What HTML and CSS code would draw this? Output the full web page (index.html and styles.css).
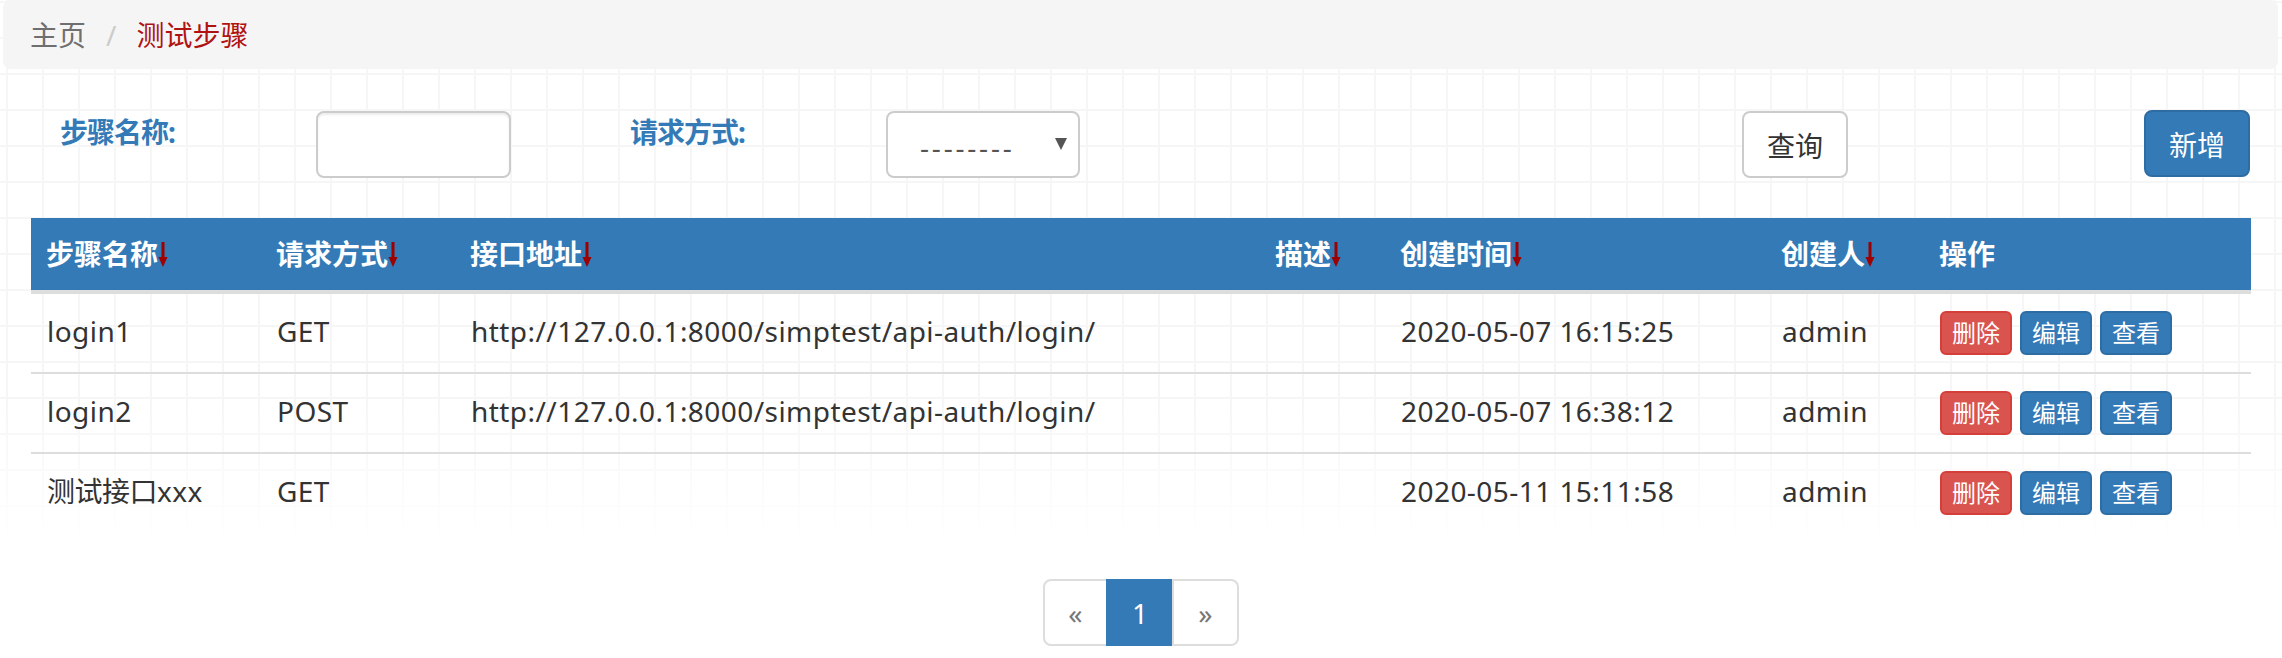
FILE: index.html
```html
<!DOCTYPE html>
<html lang="zh-CN">
<head>
<meta charset="utf-8">
<title>测试步骤</title>
<link rel="stylesheet" href="styles.css">
</head>
<body>
<ol class="breadcrumb">
  <li class="crumb"><a class="crumb-link" href="#">主页</a></li>
  <li class="crumb-sep">/</li>
  <li class="crumb active">测试步骤</li>
</ol>

<form class="search">
  <label class="search-label">步骤名称:</label>
  <input class="form-control" type="text">
  <label class="search-label">请求方式:</label>
  <div class="select-wrap">
    <select class="form-select"><option>--------</option></select>
    <span class="caret"></span>
  </div>
  <button class="btn btn-default" type="button">查询</button>
  <button class="btn btn-primary" type="button">新增</button>
</form>

<table class="table">
  <colgroup>
    <col class="c1"><col class="c2"><col class="c3"><col class="c4"><col class="c5"><col class="c6"><col class="c7">
  </colgroup>
  <thead>
    <tr>
      <th>步骤名称<svg class="sort" viewBox="0 0 10 26" width="10" height="26"><path d="M5 0V18" stroke="#9e0000" stroke-width="3"/><path d="M0.5 15L9.5 15L5 25Z" fill="#9e0000"/></svg></th>
      <th>请求方式<svg class="sort" viewBox="0 0 10 26" width="10" height="26"><path d="M5 0V18" stroke="#9e0000" stroke-width="3"/><path d="M0.5 15L9.5 15L5 25Z" fill="#9e0000"/></svg></th>
      <th>接口地址<svg class="sort" viewBox="0 0 10 26" width="10" height="26"><path d="M5 0V18" stroke="#9e0000" stroke-width="3"/><path d="M0.5 15L9.5 15L5 25Z" fill="#9e0000"/></svg></th>
      <th>描述<svg class="sort" viewBox="0 0 10 26" width="10" height="26"><path d="M5 0V18" stroke="#9e0000" stroke-width="3"/><path d="M0.5 15L9.5 15L5 25Z" fill="#9e0000"/></svg></th>
      <th>创建时间<svg class="sort" viewBox="0 0 10 26" width="10" height="26"><path d="M5 0V18" stroke="#9e0000" stroke-width="3"/><path d="M0.5 15L9.5 15L5 25Z" fill="#9e0000"/></svg></th>
      <th>创建人<svg class="sort" viewBox="0 0 10 26" width="10" height="26"><path d="M5 0V18" stroke="#9e0000" stroke-width="3"/><path d="M0.5 15L9.5 15L5 25Z" fill="#9e0000"/></svg></th>
      <th>操作</th>
    </tr>
  </thead>
  <tbody>
    <tr>
      <td>login1</td>
      <td>GET</td>
      <td>http://127.0.0.1:8000/simptest/api-auth/login/</td>
      <td></td>
      <td>2020-05-07 16:15:25</td>
      <td>admin</td>
      <td><div class="ops"><button class="btn-xs btn-danger" type="button">删除</button><button class="btn-xs btn-blue" type="button">编辑</button><button class="btn-xs btn-blue" type="button">查看</button></div></td>
    </tr>
    <tr>
      <td>login2</td>
      <td>POST</td>
      <td>http://127.0.0.1:8000/simptest/api-auth/login/</td>
      <td></td>
      <td>2020-05-07 16:38:12</td>
      <td>admin</td>
      <td><div class="ops"><button class="btn-xs btn-danger" type="button">删除</button><button class="btn-xs btn-blue" type="button">编辑</button><button class="btn-xs btn-blue" type="button">查看</button></div></td>
    </tr>
    <tr>
      <td><span class="cjk">测试接口</span>xxx</td>
      <td>GET</td>
      <td></td>
      <td></td>
      <td>2020-05-11 15:11:58</td>
      <td>admin</td>
      <td><div class="ops"><button class="btn-xs btn-danger" type="button">删除</button><button class="btn-xs btn-blue" type="button">编辑</button><button class="btn-xs btn-blue" type="button">查看</button></div></td>
    </tr>
  </tbody>
</table>

<ul class="pagination">
  <li class="page disabled"><span class="page-link prev">&laquo;</span></li>
  <li class="page active"><span class="page-link num">1</span></li>
  <li class="page disabled"><span class="page-link next">&raquo;</span></li>
</ul>
</body>
</html>
```
FILE: styles.css
```css
html, body {
  margin: 0;
  height: 100%;
}
body {
  font-family: "Noto Sans", "Noto Sans CJK SC", sans-serif;
  font-size: 28px;
  color: #333;
  background-color: #fff;
  background-image:
    linear-gradient(to bottom, rgba(255,255,255,0) 0, rgba(255,255,255,0) 400px, #fff 540px),
    linear-gradient(to right, #f6f6f6 2px, transparent 2px),
    linear-gradient(to bottom, #f6f6f6 2px, transparent 2px);
  background-size: 100% 100%, 36px 36px, 36px 36px;
  background-position: 0 0, 6px 1px, 6px 1px;
  background-repeat: no-repeat, repeat, repeat;
  overflow: hidden;
}

/* breadcrumb */
.breadcrumb {
  list-style: none;
  margin: 0 4px 0 3px;
  padding: 0 27px;
  height: 69px;
  box-sizing: border-box;
  display: flex;
  align-items: center;
  background: #f5f5f5;
  border-radius: 8px;
  line-height: 40px;
}
.crumb-link {
  color: #6f6f6f;
  text-decoration: none;
}
.crumb-sep {
  color: #ccc;
  margin: 0 20px;
}
.crumb.active {
  color: #b01212;
}

/* search form */
.search {
  display: grid;
  grid-template-columns: 256px 314px 256px 856px 402px 106px;
  align-items: start;
  margin: 42px 0 40px 60px;
  height: 67px;
}
.search-label {
  color: #337ab7;
  font-weight: bold;
  line-height: 40px;
  margin-top: 1px;
  letter-spacing: -1px;
}
.form-control {
  width: 195px;
  height: 67px;
  box-sizing: border-box;
  border: 2px solid #ccc;
  border-radius: 8px;
  box-shadow: inset 0 2px 2px rgba(0,0,0,.075);
  font: inherit;
  padding: 0 24px;
  background: #fff;
}
.select-wrap {
  position: relative;
  width: 194px;
  height: 67px;
}
.form-select {
  appearance: none;
  -webkit-appearance: none;
  width: 100%;
  height: 100%;
  box-sizing: border-box;
  border: 2px solid #ccc;
  border-radius: 8px;
  background: #fff;
  font-family: inherit;
  font-size: 28px;
  color: #555;
  padding: 4px 0 0 32px;
  letter-spacing: 2.8px;
}
.caret {
  position: absolute;
  right: 13px;
  top: 27px;
  width: 0;
  height: 0;
  border-left: 6px solid transparent;
  border-right: 6px solid transparent;
  border-top: 12px solid #555;
}
.btn {
  width: 106px;
  height: 67px;
  box-sizing: border-box;
  border: 2px solid #ccc;
  border-radius: 8px;
  font-family: inherit;
  font-size: 28px;
  padding: 0;
  cursor: pointer;
}
.btn-default {
  background: #fff;
  color: #333;
}
.btn-primary {
  background: #337ab7;
  border-color: #2e6da4;
  color: #fff;
  margin-top: -1px;
}

/* table */
.table {
  margin-left: 31px;
  width: 2220px;
  border-collapse: collapse;
  table-layout: fixed;
}
.c1 { width: 230px; }
.c2 { width: 194px; }
.c3 { width: 805px; }
.c4 { width: 125px; }
.c5 { width: 381px; }
.c6 { width: 158px; }
.c7 { width: 327px; }
.table th {
  background: #337ab7;
  color: #fff;
  font-weight: bold;
  text-align: left;
  padding: 16px 16px 16px 15px;
  line-height: 40px;
  border-bottom: 4px solid #ddd;
  white-space: nowrap;
}
.sort {
  vertical-align: -3px;
}
.table td {
  padding: 17px 16px;
  line-height: 40px;
  vertical-align: top;
  white-space: nowrap;
  letter-spacing: 0.45px;
}
.cjk {
  letter-spacing: -0.5px;
}
.table tbody tr + tr td {
  border-top: 2px solid #ddd;
}
.ops {
  display: flex;
  gap: 8px;
  letter-spacing: 0;
}
.btn-xs {
  width: 72px;
  height: 44px;
  box-sizing: border-box;
  border: 2px solid;
  border-radius: 6px;
  font-family: inherit;
  font-size: 24px;
  color: #fff;
  padding: 0;
  line-height: 36px;
}
.btn-danger {
  background: #d9534f;
  border-color: #d43f3a;
}
.btn-blue {
  background: #337ab7;
  border-color: #2e6da4;
}

/* pagination */
.pagination {
  list-style: none;
  display: flex;
  justify-content: center;
  margin: 47px 0 0;
  padding: 0;
}
.page-link {
  display: flex;
  align-items: center;
  justify-content: center;
  height: 67px;
  box-sizing: border-box;
  border: 2px solid #ddd;
  background: #fff;
  color: #777;
  line-height: 40px;
}
.prev {
  width: 65px;
  border-radius: 8px 0 0 8px;
}
.num {
  width: 68px;
  margin-left: -2px;
}
.next {
  width: 67px;
  margin-left: -2px;
  border-radius: 0 8px 8px 0;
}
.page.active .page-link {
  background: #337ab7;
  border-color: #337ab7;
  color: #fff;
}
```
